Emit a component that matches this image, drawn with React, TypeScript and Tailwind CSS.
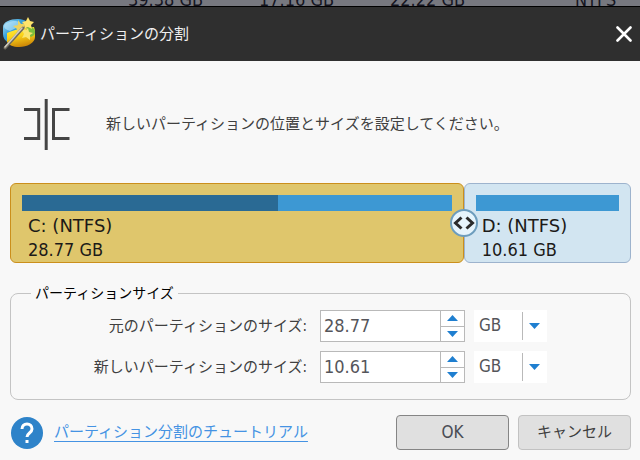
import { useId, useState } from 'react';

const partitions = [
  { letter: 'C', fs: 'NTFS', size: 28.77, used: 59.5, selected: true },
  { letter: 'D', fs: 'NTFS', size: 10.61, used: 0, selected: false },
];

const total = partitions.reduce((sum, p) => sum + p.size, 0);

const AppIcon = () => (
  <svg viewBox="0 0 34 34" className="w-[34px] h-[34px] shrink-0" aria-hidden="true">
    <defs>
      <linearGradient id="disk-blue" x1="0" y1="0" x2="1" y2="1">
        <stop offset="0" stopColor="#b5e6fa" />
        <stop offset="0.4" stopColor="#3aa5df" />
        <stop offset="1" stopColor="#1670b4" />
      </linearGradient>
      <linearGradient id="disk-gold" x1="0" y1="0" x2="0.3" y2="1">
        <stop offset="0" stopColor="#fff04a" />
        <stop offset="0.5" stopColor="#fbd51a" />
        <stop offset="1" stopColor="#d08c08" />
      </linearGradient>
    </defs>
    <path d="M1 10C1 5 8 2 16 2c4 0 6 1 8 2l-8 8-9 14c-4-2-6-5-6-9Z" fill="url(#disk-blue)" />
    <path d="M2 9c1-3 6-5 12-5l4 1-4 6-6 3c-4-1-6-3-6-5Z" fill="#c4eafa" opacity="0.6" />
    <path d="M5 16c4-2 8-3 12-4l15-2c1 3 1 6 1 10 0 6-8 10-16 10-6 0-10-2-12-5Z" fill="url(#disk-gold)" />
    <path d="M26 9c5 1 7 3 7 6 0 2-1 4-4 5l-6-5Z" fill="#7dbf3c" />
    <path d="m16 3 3 4 5-1-2 5 2 4-5-1-4 3v-5l-4-3 5-1Z" fill="#ecd35f" />
    <path d="m26 0 2 4 4 1-3 3 1 4-4-2-4 2 1-4-3-3 4-1Z" fill="#ffe56b" />
    <path d="m26 11 1 4 4 1-3 2v5l-4-3-4 1 2-4-2-4h4Z" fill="#f9e56f" />
    <path d="M3 31 21 11" stroke="#6f6b60" strokeWidth="3" strokeLinecap="round" />
    <path d="M3 30 20 11" stroke="#d2cec0" strokeWidth="1.5" strokeLinecap="round" />
  </svg>
);

const SplitIcon = () => (
  <svg viewBox="0 0 46 52" className="w-[46px] h-[52px] shrink-0" fill="none" stroke="#454545" strokeWidth="3" aria-hidden="true">
    <path d="M0 11.500h14.700v29H0" />
    <path d="M22.200 1v51" />
    <path d="M45.500 11.500H29.500v29h16" />
  </svg>
);

const PartitionBlock = ({ partition }: { partition: (typeof partitions)[number] }) => (
  <div
    className={`rounded-md border px-[11px] pt-[11px] h-20 ${
      partition.selected ? 'bg-[#dfc66c] border-[#cb8f1c]' : 'bg-[#d2e5f1] border-[#9db3cd]'
    }`}
    style={{ width: `${(partition.size / total) * 100}%` }}
  >
    <div className="h-4 bg-[#3d98d3]">
      <div className="h-full bg-[#2a6a94]" style={{ width: `${partition.used}%` }}></div>
    </div>
    <div className="pl-[6px] pt-[3px] text-lg leading-6 text-[#1c1a18] whitespace-nowrap">
      <p className="font-['DejaVu_Sans',sans-serif]">{partition.letter}: ({partition.fs})</p>
      <p>{partition.size} GB</p>
    </div>
  </div>
);

const SizeRow = ({ label, initial }: { label: string; initial: number }) => {
  const id = useId();
  const [value, setValue] = useState(initial.toFixed(2));
  const step = (delta: number) => setValue((Number(value) + delta).toFixed(2));

  return (
    <div className="flex items-center">
      <label htmlFor={id} className="w-[309px] pr-[13px] text-right text-[15px] text-[#404040] whitespace-nowrap">
        {label}:
      </label>
      <div className="flex w-[145px] h-8 border border-[#b9b9b9] bg-white">
        <input
          id={id}
          type="text"
          value={value}
          onChange={(e) => setValue(e.target.value)}
          className="min-w-0 flex-1 pl-[3px] text-lg leading-6 text-[#55555a] outline-none"
        />
        <div className="flex flex-col w-6 border-l border-[#b9b9b9]">
          <button type="button" aria-label="増やす" onClick={() => step(0.01)} className="flex-1 flex items-center justify-center border-b border-[#b9b9b9]">
            <svg viewBox="0 0 11 6" className="w-[11px] h-[6px]" fill="#1f7fd0"><path d="M0 6 5.500 0 11 6Z" /></svg>
          </button>
          <button type="button" aria-label="減らす" onClick={() => step(-0.01)} className="flex-1 flex items-center justify-center">
            <svg viewBox="0 0 11 6" className="w-[11px] h-[6px]" fill="#1f7fd0"><path d="M0 0h11L5.500 6Z" /></svg>
          </button>
        </div>
      </div>
      <div className="relative ml-[9px] w-[73px] h-8 bg-white">
        <select aria-label={`${label} 単位`} className="appearance-none w-full h-full pl-[5px] text-[17px] text-[#55555a] outline-none">
          <option>GB</option>
          <option>MB</option>
        </select>
        <span className="absolute inset-y-[2px] right-0 w-[25px] border-l border-[#b9b9b9] flex items-center pl-[6px] pointer-events-none">
          <svg viewBox="0 0 11 6" className="w-[11px] h-[6px]" fill="#1f7fd0"><path d="M0 0h11L5.500 6Z" /></svg>
        </span>
      </div>
    </div>
  );
};

const App = () => {
  return (
    <div className="min-h-screen bg-[#f8f8f8] font-['DejaVu_Sans_Condensed','Noto_Sans_CJK_JP',sans-serif]">
      <div className="h-[6px] overflow-hidden bg-[#77787f] flex items-end pl-[20%] text-lg leading-3 text-[#15151f] whitespace-nowrap">
        <span className="w-[131px]">39.38 GB</span>
        <span className="w-[131px]">17.16 GB</span>
        <span className="w-[185px]">22.22 GB</span>
        <span>NTFS</span>
      </div>

      <header className="flex items-center h-[55px] pl-[2px] pr-2 bg-[#2f2f2f] border-t border-black text-white">
        <AppIcon />
        <h1 className="pl-1 text-[15px] flex-1 text-[#f0f0f0]">パーティションの分割</h1>
        <button type="button" aria-label="閉じる" className="w-4 h-4">
          <svg viewBox="0 0 16 16" stroke="white" strokeWidth="2.6" strokeLinecap="round"><path d="M1.500 1.500l13 13M14.500 1.500l-13 13" /></svg>
        </button>
      </header>

      <main className="pl-[10px] pr-[9px]">
        <div className="flex items-center gap-9 pl-[14px] pt-[37px] pb-[33px]">
          <SplitIcon />
          <p className="text-[15px] text-[#404040]">新しいパーティションの位置とサイズを設定してください。</p>
        </div>

        <div className="relative flex">
          {partitions.map((partition) => (
            <PartitionBlock key={partition.letter} partition={partition} />
          ))}
          <button
            type="button"
            aria-label="境界を移動"
            className="absolute top-1/2 -translate-x-1/2 -translate-y-1/2 w-7 h-7 rounded-full border-2 border-[#6d9dbd] bg-[#e6f4fc] flex items-center justify-center"
            style={{ left: `${(partitions[0].size / total) * 100}%` }}
          >
            <svg viewBox="0 0 22 14" className="w-[22px] h-[14px] shrink-0" fill="none" stroke="#2b2b2b" strokeWidth="3"><path d="M8.500 1.500 2.500 7l6 5.500M13.500 1.500l6 5.500-6 5.500" /></svg>
          </button>
        </div>

        <fieldset className="mt-5 rounded-lg border border-[#c4c4c4] pb-4">
          <legend className="ml-5 px-1 text-sm leading-5 text-black">パーティションサイズ</legend>
          <div className="flex flex-col gap-[9px] pt-[7px]">
            <SizeRow label="元のパーティションのサイズ" initial={28.77} />
            <SizeRow label="新しいパーティションのサイズ" initial={10.61} />
          </div>
        </fieldset>

        <footer className="flex items-center pt-[15px]">
          <span className="w-8 h-8 ml-[1px] rounded-full bg-[#2e83c9] flex items-center justify-center" aria-hidden="true">
            <svg viewBox="0 0 14 22" className="w-[14px] h-[22px]" fill="none" stroke="white" strokeWidth="3"><path d="M2 7c0-3 2-5 5-5s5 2 5 5c0 4-5 4-5 8M7 18v3" /></svg>
          </span>
          <a href="#tutorial" className="ml-[11px] text-[15px] text-[#4593e3] underline underline-offset-4 decoration-1">パーティション分割のチュートリアル</a>
          <div className="ml-auto flex gap-[9px]">
            <button type="button" className="w-[113px] h-[35px] rounded-sm border border-[#858585] bg-[#e0e0e0] text-[17px] text-[#4a4d55]">OK</button>
            <button type="button" className="w-[113px] h-[35px] rounded-sm border border-[#c2c2c2] bg-[#e0e0e0] text-[15px] text-[#404040]">キャンセル</button>
          </div>
        </footer>
      </main>
    </div>
  );
};

export default App;
